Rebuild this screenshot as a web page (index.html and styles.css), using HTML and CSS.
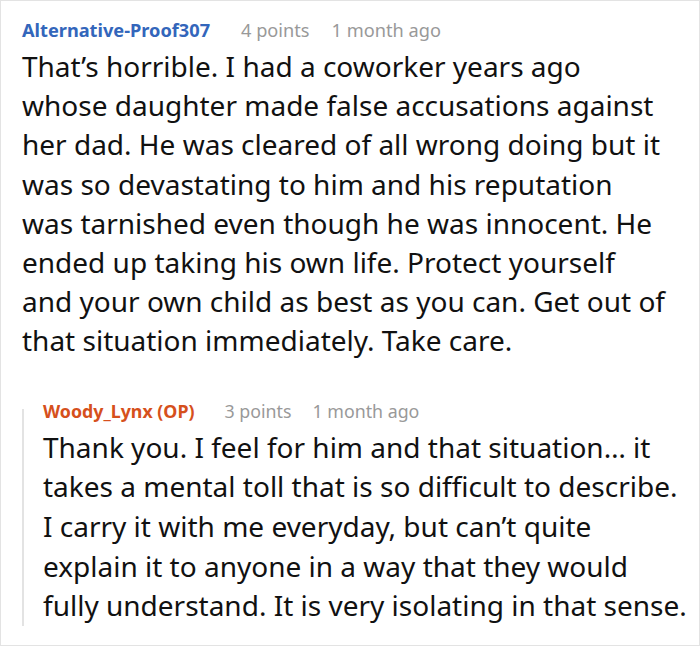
FILE: index.html
```html
<!DOCTYPE html>
<html>
<head>
<meta charset="utf-8">
<link rel="stylesheet" href="styles.css">
</head>
<body>
<div class="card">
  <div class="comment">
    <div class="meta">
      <span class="author">Alternative-Proof307</span>
      <span class="info">4 points</span>
      <span class="info">1 month ago</span>
    </div>
    <p class="text">That’s horrible. I had a coworker years ago whose daughter made false accusations against her dad. He was cleared of all wrong doing but it was so devastating to him and his reputation was tarnished even though he was innocent. He ended up taking his own life. Protect yourself and your own child as best as you can. Get out of that situation immediately. Take care.</p>
  </div>
  <div class="reply">
    <div class="meta">
      <span class="author op">Woody_Lynx (OP)</span>
      <span class="info">3 points</span>
      <span class="info">1 month ago</span>
    </div>
    <p class="text">Thank you. I feel for him and that situation… it takes a mental toll that is so difficult to describe. I carry it with me everyday, but can’t quite explain it to anyone in a way that they would fully&nbsp;understand. It is very isolating in that sense.</p>
  </div>
</div>
</body>
</html>
```
FILE: styles.css
```css
html, body {
  margin: 0;
  padding: 0;
  background: #fff;
}
body {
  font-family: "Noto Sans", "Open Sans", sans-serif;
  color: #111;
}
.card {
  width: 700px;
  height: 646px;
  box-sizing: border-box;
  border: 1px solid #e3e3e3;
  padding: 16px 6px 0 21px;
  overflow: hidden;
}
.comment {
  padding-right: 28px;
}
.meta {
  display: flex;
  gap: 22px;
  align-items: baseline;
  font-size: 18.2px;
  line-height: 26px;
}
.author {
  font-weight: 700;
  color: #3366bb;
  margin-right: 9px;
}
.author.op {
  color: #d6501c;
}
.info {
  color: #999;
}
.text {
  margin: 4px 0 0;
  font-size: 28px;
  line-height: 39.2px;
}
.reply {
  margin-top: 37px;
  padding-left: 21px;
  background: linear-gradient(#e3e3e3, #e3e3e3) no-repeat 0 11px / 2px calc(100% - 11px);
}
.reply .meta {
  font-size: 17.8px;
  gap: 21px;
}
.reply .text {
  line-height: 39.7px;
}
```
